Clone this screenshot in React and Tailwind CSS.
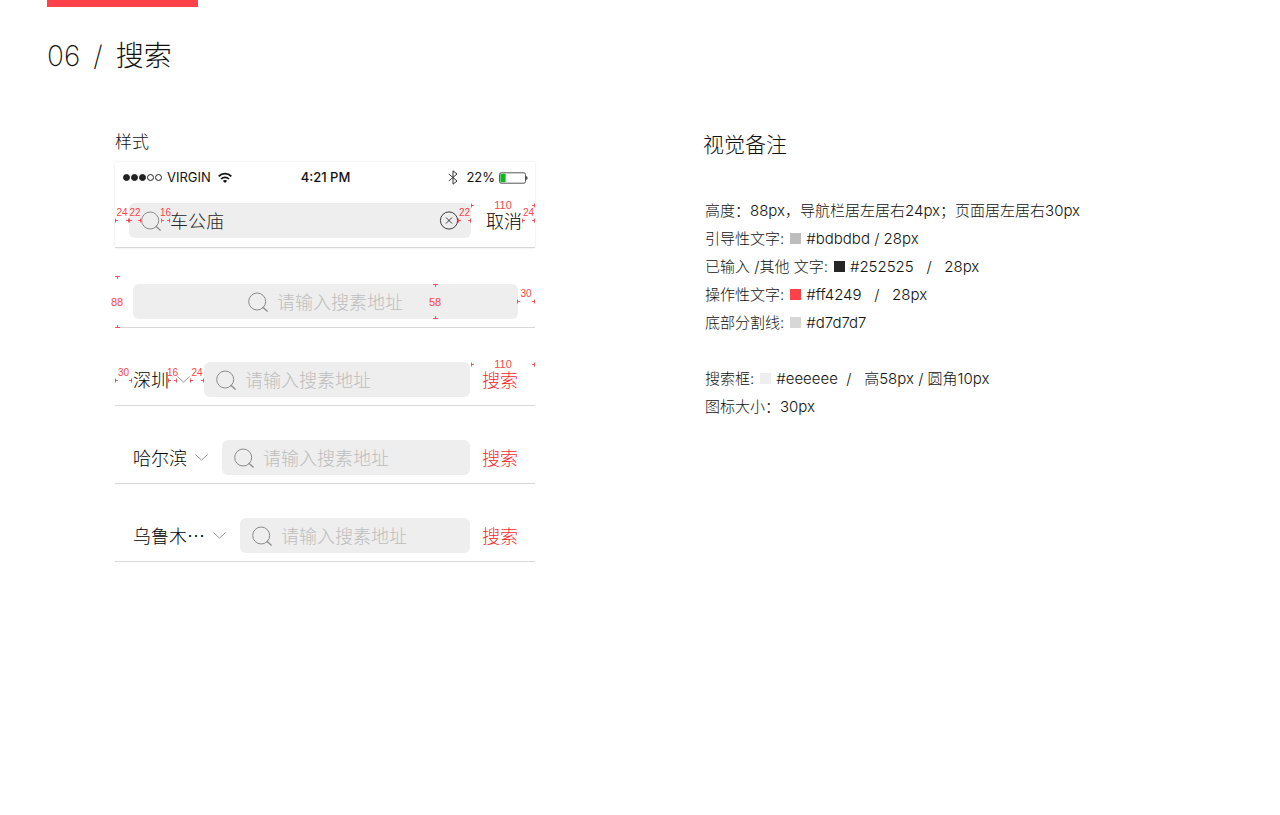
import clsx from 'clsx';

const sans = "font-['Inter','Noto_Sans_CJK_SC',sans-serif]";
const cjk = "font-['Noto_Sans_CJK_SC',sans-serif]";
const figures = "font-['Liberation_Sans',sans-serif] leading-[10px] text-[#ff4249]";

const SearchIcon = () => (
  <svg viewBox="0 0 20 20" className="size-5 shrink-0" fill="none" stroke="#8a8a8a" aria-hidden="true">
    <circle cx="9.2" cy="9.5" r="8.5" strokeWidth="1" />
    <path d="M14.6 15 L19.6 19.4" strokeWidth="1.3" />
  </svg>
);

const ChevronIcon = () => (
  <svg viewBox="0 0 13 7" className="h-[7px] w-[13px] shrink-0" fill="none" stroke="#969696" aria-hidden="true">
    <path d="M0.4 0.5 L6.5 6.2 L12.6 0.5" />
  </svg>
);

const ClearIcon = () => (
  <svg viewBox="0 0 20 20" className="size-5" fill="none" stroke="#3c3c3c" aria-hidden="true">
    <circle cx="10" cy="9.5" r="8.6" />
    <path d="M7 6.5 L13 12.5 M13 6.5 L7 12.5" />
  </svg>
);

const WifiIcon = () => (
  <svg viewBox="0 0 14 12" className="h-3 w-3.5" fill="none" stroke="#111" aria-hidden="true">
    <path d="M0.7 4.4 C4.2 0.7 9.8 0.7 13.3 4.4" strokeWidth="1.9" />
    <path d="M3.1 7 C5.2 4.8 8.8 4.8 10.9 7" strokeWidth="1.7" />
    <path d="M7 11 L4.8 8.8 C6 7.7 8 7.7 9.2 8.8 Z" fill="#111" stroke="none" />
  </svg>
);

const BluetoothIcon = () => (
  <svg viewBox="0 0 10 15" className="h-[15px] w-2.5" fill="none" stroke="#333" aria-hidden="true">
    <path d="M0.8 4 L9 11 L5 14.2 V0.8 L9 4 L0.8 11" />
  </svg>
);

const BatteryIcon = () => (
  <svg viewBox="0 0 29 12" className="h-3 w-[29px]" aria-hidden="true">
    <rect x="0.5" y="0.8" width="26" height="10.4" rx="1.6" fill="#fff" stroke="#555" />
    <rect x="1.4" y="1.7" width="5.2" height="8.6" rx="0.6" fill="#0db81f" />
    <path d="M27.2 4 C29 4.6 29 7.4 27.2 8 Z" fill="#222" />
  </svg>
);

const Tick = ({ className }) => (
  <svg viewBox="0 0 3 5" className={clsx('h-[5px] w-[3px] shrink-0', className)} stroke="#ff4249" aria-hidden="true">
    <path d="M0.5 0.5 V4.5 M0 2.5 H3" strokeWidth="0.9" />
  </svg>
);

const VerticalTick = ({ className }) => (
  <svg viewBox="0 0 5 3" className={clsx('h-[3px] w-[5px] shrink-0', className)} stroke="#ff4249" aria-hidden="true">
    <path d="M0 0.5 H5 M2.5 0 V3" strokeWidth="0.9" />
  </svg>
);

// horizontal gap: two ticks, number above them
const Gap = ({ value, className }) => (
  <div className={clsx('absolute flex justify-between', className)}>
    <Tick />
    <span className={clsx(figures, 'absolute bottom-[5px] left-1/2 -translate-x-1/2 text-[10px]')}>{value}</span>
    <Tick className="rotate-180" />
  </div>
);

// wide gap: the number sits between the ticks
const WideGap = ({ value, className }) => (
  <div className={clsx('absolute flex items-center justify-between', className)}>
    <Tick />
    <span className={clsx(figures, 'text-[11px]')}>{value}</span>
    <Tick className="rotate-180" />
  </div>
);

const Height = ({ value, className }) => (
  <div className={clsx('absolute flex flex-col items-center justify-between', className)}>
    <VerticalTick />
    <span className={clsx(figures, 'text-[11px]')}>{value}</span>
    <VerticalTick className="rotate-180" />
  </div>
);

const SearchField = ({ centered, value, clearable }) => (
  <div
    className={clsx(
      'flex h-[35px] min-w-0 flex-1 items-center gap-[9px] rounded-md bg-[#eeeeee] px-3',
      centered && 'justify-center',
    )}
  >
    <SearchIcon />
    <input
      type="text"
      aria-label="搜索"
      placeholder="请输入搜素地址"
      defaultValue={value}
      className={clsx(
        cjk,
        'h-full min-w-0 bg-transparent pb-0.5 text-lg font-light text-[#252525] outline-none placeholder:text-[#bdbdbd]',
        centered ? 'w-[126px]' : 'flex-1',
      )}
    />
    {clearable && (
      <button type="button" aria-label="清除">
        <ClearIcon />
      </button>
    )}
  </div>
);

const CityButton = ({ name }) => (
  <button type="button" className={clsx(cjk, 'mr-3.5 flex shrink-0 items-center gap-2 text-lg font-light text-black')}>
    <span className="pb-0.5">{name}</span>
    <ChevronIcon />
  </button>
);

const Action = ({ className, children }) => (
  <button type="button" className={clsx(cjk, 'shrink-0 pb-px text-lg leading-5 font-light', className)}>
    {children}
  </button>
);

const SearchRow = ({ city, children }) => (
  <div className="relative flex items-center border-b border-[#d7d7d7] pr-[17px] pb-2 pl-[18px]">
    {city && <CityButton name={city} />}
    <SearchField centered={!city} />
    {city && <Action className="ml-3 text-[#ff1f2b]">搜索</Action>}
    {children}
  </div>
);

const StatusBar = () => (
  <div className="grid h-[30px] grid-cols-3 items-center pt-px pr-[7px] pl-2 text-[13px] text-[#111]">
    <div className="flex items-center">
      <div className="flex gap-px">
        {[true, true, true, false, false].map((on, i) => (
          <span key={i} className={clsx('size-[7px] rounded-full border border-[#222]', on && 'bg-[#222]')} />
        ))}
      </div>
      <span className="mr-[7px] ml-[5px]">VIRGIN</span>
      <WifiIcon />
    </div>
    <span className="text-center font-medium">4:21 PM</span>
    <div className="flex items-center justify-end">
      <BluetoothIcon />
      <span className="mr-1 ml-2">22%</span>
      <BatteryIcon />
    </div>
  </div>
);

const Swatch = ({ className }) => <span className={clsx('mr-[5px] ml-1.5 inline-block size-[11px]', className)} />;

export default function App() {
  return (
    <div className={clsx(sans, 'min-h-screen bg-white pl-[47px] text-[#111]')} lang="zh-CN">
      <div className="h-[7px] w-[151px] bg-[#ff4249]" />
      <h1 className="mt-[29px] flex gap-[13px] text-[28px] leading-10 font-extralight">
        <span>06</span>
        <span>/</span>
        <span className="font-light">搜索</span>
      </h1>

      <main className="mt-[54px] flex pl-[68px]">
        <section className="w-full max-w-[420px]">
          <h2 className="text-[17px] leading-6 font-light">样式</h2>

          <div className="relative mt-2 border-b border-[#d7d7d7] shadow-[0_0_2px_rgba(0,0,0,0.12)]">
            <StatusBar />
            <div className="flex items-center pt-[11px] pr-[13px] pb-[9px] pl-3.5">
              <SearchField value="车公庙" clearable />
              <Action className="ml-[15px] text-black">取消</Action>
            </div>
            <Gap value="24" className="top-14 left-0 w-3.5" />
            <Gap value="22" className="top-14 left-3.5 w-3" />
            <Gap value="16" className="top-14 left-[46px] w-[9px]" />
            <Gap value="22" className="top-14 right-16 w-[13px]" />
            <WideGap value="110" className="top-[38px] right-0 w-16" />
            <Gap value="24" className="top-14 right-0 w-[13px]" />
          </div>

          <div className="mt-9 flex flex-col gap-[34px]">
            <SearchRow>
              <Height value="88" className="-top-2 -bottom-px -left-1 w-3" />
              <Height value="58" className="top-0 right-[94px] h-[35px] w-3" />
              <Gap value="30" className="top-[15px] right-0 w-[18px]" />
            </SearchRow>
            <SearchRow city="深圳">
              <Gap value="30" className="top-4 left-0 w-[17px]" />
              <Gap value="16" className="top-4 left-[53px] w-[9px]" />
              <Gap value="24" className="top-4 left-[75px] w-3.5" />
              <WideGap value="110" className="-top-[3px] right-0 w-16" />
            </SearchRow>
            <SearchRow city="哈尔滨" />
            <SearchRow city="乌鲁木…" />
          </div>
        </section>

        <section className="ml-[168px] shrink-0 font-light">
          <h2 className="text-[21px] leading-[30px] font-light">视觉备注</h2>
          <div className="mt-[37px] pl-0.5 text-[15px] leading-7 whitespace-pre">
            <p>高度：88px，导航栏居左居右24px；页面居左居右30px</p>
            <p>引导性文字:<Swatch className="bg-[#bdbdbd]" />#bdbdbd / 28px</p>
            <p>已输入 /其他 文字:<Swatch className="bg-[#252525]" />#252525   /   28px</p>
            <p>操作性文字:<Swatch className="bg-[#ff4249]" />#ff4249   /   28px</p>
            <p>底部分割线:<Swatch className="bg-[#d7d7d7]" />#d7d7d7</p>
            <p className="mt-7">搜索框:<Swatch className="bg-[#eeeeee]" />#eeeeee  /   高58px / 圆角10px</p>
            <p>图标大小：30px</p>
          </div>
        </section>
      </main>
    </div>
  );
}
